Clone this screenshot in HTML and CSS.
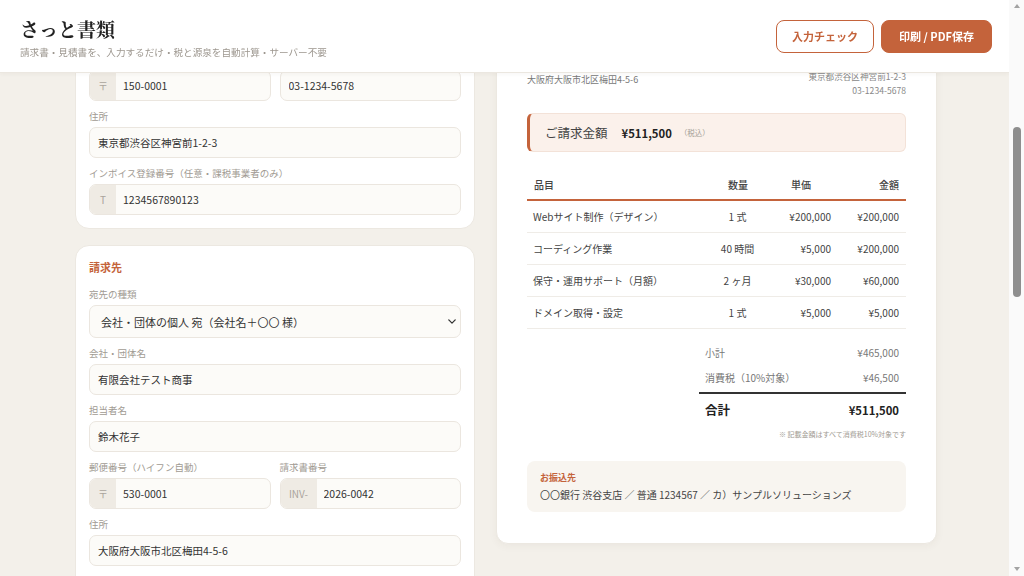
FILE: index.html
```html
<!DOCTYPE html>
<html lang="ja">
  <head>
    <meta charset="UTF-8" />
    <title>さっと書類</title>
    <link rel="stylesheet" href="styles.css">
  </head>
  <body>
    <div class="app">
      <header class="topbar">
        <div class="brand">
          <h1>さっと書類</h1>
          <p>請求書・見積書を、入力するだけ・税と源泉を自動計算・サーバー不要</p>
        </div>
        <div class="actions">
          <button class="btn btn-outline">入力チェック</button>
          <button class="btn btn-primary">印刷 / PDF保存</button>
        </div>
      </header>

      <main class="layout">
        <section class="editor">
          <div class="card">
            <div class="card-title">書類設定</div>
            <div class="field">
              <label>書類の種類</label>
              <div class="select">
                <select><option>請求書</option><option>見積書</option></select>
                <svg viewBox="0 0 10 6" width="8" height="5"><path d="M1 1l4 4 4-4" fill="none" stroke="#333" stroke-width="1.6" stroke-linecap="round" stroke-linejoin="round"/></svg>
              </div>
            </div>
            <div class="row field">
              <div>
                <label>発行日</label>
                <input class="text" value="2026-01-31">
              </div>
              <div>
                <label>お支払期限</label>
                <input class="text" value="2026-02-28">
              </div>
            </div>
          </div>

          <div class="card">
            <div class="card-title">発行元（あなた）</div>
            <div class="field">
              <label>屋号・会社名</label>
              <input class="text" value="サンプルソリューションズ">
            </div>
            <div class="field">
              <label>担当者名</label>
              <input class="text" value="山田太郎">
            </div>
            <div class="row field">
              <div>
                <label>郵便番号（ハイフン自動）</label>
                <div class="affix"><span>〒</span><input value="150-0001"></div>
              </div>
              <div>
                <label>電話番号</label>
                <input class="text" value="03-1234-5678">
              </div>
            </div>
            <div class="field">
              <label>住所</label>
              <input class="text" value="東京都渋谷区神宮前1-2-3">
            </div>
            <div class="field">
              <label>インボイス登録番号（任意・課税事業者のみ）</label>
              <div class="affix"><span>T</span><input value="1234567890123"></div>
            </div>
          </div>

          <div class="card client">
            <div class="card-title">請求先</div>
            <div class="field">
              <label>宛先の種類</label>
              <div class="select">
                <select>
                  <option>会社・団体の個人 宛（会社名＋〇〇 様）</option>
                  <option>会社・団体 宛（御中）</option>
                  <option>個人 宛（様）</option>
                </select>
                <svg viewBox="0 0 10 6" width="8" height="5"><path d="M1 1l4 4 4-4" fill="none" stroke="#333" stroke-width="1.6" stroke-linecap="round" stroke-linejoin="round"/></svg>
              </div>
            </div>
            <div class="field">
              <label>会社・団体名</label>
              <input class="text" value="有限会社テスト商事">
            </div>
            <div class="field">
              <label>担当者名</label>
              <input class="text" value="鈴木花子">
            </div>
            <div class="row field">
              <div>
                <label>郵便番号（ハイフン自動）</label>
                <div class="affix"><span>〒</span><input value="530-0001"></div>
              </div>
              <div>
                <label>請求書番号</label>
                <div class="affix affix-wide"><span>INV-</span><input value="2026-0042"></div>
              </div>
            </div>
            <div class="field">
              <label>住所</label>
              <input class="text" value="大阪府大阪市北区梅田4-5-6">
            </div>
            <div class="field">
              <label>件名</label>
              <input class="text" value="Webサイト制作一式">
            </div>
          </div>

          <div class="card">
            <div class="card-title">明細</div>
            <div class="item">
              <input class="text" value="Webサイト制作（デザイン）">
              <div class="item-nums">
                <input class="text" value="1"><input class="text" value="式"><input class="text" value="200000">
              </div>
            </div>
            <div class="item">
              <input class="text" value="コーディング作業">
              <div class="item-nums">
                <input class="text" value="40"><input class="text" value="時間"><input class="text" value="5000">
              </div>
            </div>
            <div class="item">
              <input class="text" value="保守・運用サポート（月額）">
              <div class="item-nums">
                <input class="text" value="2"><input class="text" value="ヶ月"><input class="text" value="30000">
              </div>
            </div>
            <div class="item">
              <input class="text" value="ドメイン取得・設定">
              <div class="item-nums">
                <input class="text" value="1"><input class="text" value="式"><input class="text" value="5000">
              </div>
            </div>
            <button class="btn-add">＋ 行を追加</button>
          </div>

          <div class="card">
            <div class="card-title">税・源泉徴収</div>
            <div class="row field">
              <div>
                <label>消費税率</label>
                <input class="text" value="10%">
              </div>
              <div>
                <label>端数処理</label>
                <input class="text" value="切り捨て">
              </div>
            </div>
            <div class="field">
              <label>源泉徴収</label>
              <input class="text" value="なし">
            </div>
          </div>

          <div class="card">
            <div class="card-title">お振込先・備考</div>
            <div class="field">
              <label>お振込先</label>
              <input class="text" value="〇〇銀行 渋谷支店 ／ 普通 1234567 ／ カ）サンプルソリューションズ">
            </div>
            <div class="field">
              <label>備考</label>
              <textarea class="text">お振込手数料はご負担ください。</textarea>
            </div>
          </div>
        </section>

        <section class="preview">
          <div class="paper">
            <div class="paper-head">
              <div class="doc-title">請求書</div>
              <div class="doc-no">No. INV-2026-0042</div>
            </div>
            <div class="doc-dates">
              <div>発行日 2026年1月31日</div>
              <div>お支払期限 2026年2月28日</div>
            </div>
            <div class="subject">件名：Webサイト制作一式</div>
            <div class="greeting">下記のとおりご請求申し上げます。</div>

            <div class="parties">
              <div class="to">
                <div class="to-name">有限会社テスト商事</div>
                <div class="to-person">鈴木花子 様</div>
                <div>〒530-0001</div>
                <div>大阪府大阪市北区梅田4-5-6</div>
              </div>
              <div class="from">
                <div class="stamp">山田</div>
                <div class="from-name">サンプルソリューションズ</div>
                <div>山田太郎</div>
                <div>登録番号 T1234567890123</div>
                <div>〒150-0001</div>
                <div>東京都渋谷区神宮前1-2-3</div>
                <div>03-1234-5678</div>
              </div>
            </div>

            <div class="amount">
              <span class="amount-label">ご請求金額</span>
              <span class="amount-value">¥511,500</span>
              <span class="amount-note">（税込）</span>
            </div>

            <table class="items">
              <thead>
                <tr>
                  <th>品目</th>
                  <th class="col-qty">数量</th>
                  <th class="col-price">単価</th>
                  <th class="col-amount">金額</th>
                </tr>
              </thead>
              <tbody>
                <tr><td>Webサイト制作（デザイン）</td><td class="qty">1 式</td><td class="num">¥200,000</td><td class="num">¥200,000</td></tr>
                <tr><td>コーディング作業</td><td class="qty">40 時間</td><td class="num">¥5,000</td><td class="num">¥200,000</td></tr>
                <tr><td>保守・運用サポート（月額）</td><td class="qty">2 ヶ月</td><td class="num">¥30,000</td><td class="num">¥60,000</td></tr>
                <tr><td>ドメイン取得・設定</td><td class="qty">1 式</td><td class="num">¥5,000</td><td class="num">¥5,000</td></tr>
              </tbody>
            </table>

            <div class="totals">
              <div class="totals-row"><span>小計</span><span>¥465,000</span></div>
              <div class="totals-row"><span>消費税（10%対象）</span><span>¥46,500</span></div>
              <div class="totals-row totals-grand"><span>合計</span><span class="grand-value">¥511,500</span></div>
            </div>
            <div class="tax-note">※ 記載金額はすべて消費税10%対象です</div>

            <div class="bank">
              <div class="bank-title">お振込先</div>
              <div class="bank-text">〇〇銀行 渋谷支店 ／ 普通 1234567 ／ カ）サンプルソリューションズ</div>
            </div>
          </div>
        </section>
      </main>
    </div>

    <div class="scrollbar">
      <span class="arrow arrow-up"></span>
      <div class="track"><div class="thumb"></div></div>
      <span class="arrow arrow-down"></span>
    </div>

    <script>
      // open at the 請求先 section
      var app = document.querySelector(".app");
      var client = document.querySelector(".client");
      app.scrollTop = client.getBoundingClientRect().top - 245;

      // scrollbar thumb follows the scroll position
      var track = document.querySelector(".track");
      var thumb = document.querySelector(".thumb");
      function drawThumb() {
        var h = track.clientHeight;
        thumb.style.height = (h * app.clientHeight / app.scrollHeight) + "px";
        thumb.style.top = (h * app.scrollTop / app.scrollHeight) + "px";
      }
      app.addEventListener("scroll", drawThumb);
      drawThumb();
    </script>
  </body>
</html>
```

FILE: styles.css
```css
* {
  box-sizing: border-box;
}
html, body {
  height: 100%;
}
html {
  background-color: #f3f0ea;
}
body {
  margin: 0;
  display: flex;
  overflow: hidden;
  font-family: "Noto Sans CJK JP", "Noto Sans", sans-serif;
  color: #333333;
}
input, select, textarea, button {
  font-family: inherit;
}
.app {
  flex: 1;
  height: 100vh;
  overflow-y: auto;
  scrollbar-width: none;
}

/* scrollbar */
.scrollbar {
  flex: none;
  width: 15px;
  height: 100vh;
  display: flex;
  flex-direction: column;
  background: #fafafa;
}
.arrow {
  flex: none;
  height: 15px;
  display: flex;
  justify-content: center;
  align-items: flex-start;
  padding-top: 4px;
}
.arrow::before {
  content: "";
  border-left: 3.5px solid transparent;
  border-right: 3.5px solid transparent;
}
.arrow-up::before {
  border-bottom: 4px solid #a3a3a3;
}
.arrow-down {
  padding-top: 6px;
}
.arrow-down::before {
  border-top: 4px solid #a3a3a3;
}
.track {
  flex: 1;
  position: relative;
}
.thumb {
  position: absolute;
  left: 4px;
  width: 8px;
  border-radius: 4px;
  background: #8e8e8e;
}

/* header */
.topbar {
  position: sticky;
  top: 0;
  z-index: 10;
  height: 73px;
  display: flex;
  align-items: center;
  justify-content: space-between;
  padding: 0 17px 0 20px;
  background: #ffffff;
  border-bottom: 1px solid #ebe7e0;
  box-shadow: 0 1px 4px rgba(80, 60, 30, 0.05);
}
.brand {
  margin-top: 3px;
}
.brand h1 {
  margin: 0;
  font-family: "Noto Serif CJK JP", "Noto Sans CJK JP", serif;
  font-size: 19px;
  line-height: 26px;
  font-weight: 700;
  color: #222222;
}
.brand p {
  margin: 3px 0 0;
  font-size: 9.6px;
  line-height: 14px;
  color: #9d978f;
}
.actions {
  display: flex;
  gap: 7px;
}
.btn {
  height: 33px;
  padding: 0 15px;
  border: 1.5px solid #c4633b;
  border-radius: 8px;
  font-size: 11px;
  font-weight: 700;
  cursor: pointer;
}
.btn-outline {
  background: #ffffff;
  color: #c4633b;
}
.btn-primary {
  background: #c4633b;
  color: #ffffff;
  padding: 0 17px;
}

/* layout */
.layout {
  display: grid;
  grid-template-columns: 400px 441px;
  gap: 21px;
  justify-content: center;
  align-items: start;
  padding: 24px 0 24px 3px;
}

/* editor cards */
.card {
  background: #ffffff;
  border: 1px solid #ece8e1;
  border-radius: 14px;
  padding: 13px;
}
.card + .card {
  margin-top: 16px;
}
.card-title {
  font-size: 11px;
  line-height: 16px;
  font-weight: 700;
  color: #c4633b;
  margin-bottom: 12px;
}
.field + .field {
  margin-top: 8px;
}
.field label {
  display: block;
  font-size: 9.5px;
  line-height: 14px;
  color: #a19b93;
  margin-bottom: 4px;
}
.row {
  display: grid;
  grid-template-columns: 1fr 1fr;
  gap: 9px;
}
.text {
  display: block;
  width: 100%;
  height: 31px;
  padding: 0 8px;
  border: 1px solid #ebe6df;
  border-radius: 7px;
  background: #fcfbf8;
  font-size: 10.5px;
  color: #333333;
  outline: none;
}
textarea.text {
  height: 64px;
  padding: 8px;
  resize: none;
}
.affix {
  display: flex;
  height: 31px;
  border: 1px solid #ebe6df;
  border-radius: 7px;
  background: #fcfbf8;
  overflow: hidden;
}
.affix span {
  width: 26px;
  flex: none;
  display: flex;
  align-items: center;
  justify-content: center;
  background: #efebe4;
  font-size: 10px;
  color: #aaa49c;
}
.affix-wide span {
  width: 36px;
}
.affix input {
  flex: 1;
  min-width: 0;
  border: 0;
  background: transparent;
  padding: 0 7px;
  font-size: 10.5px;
  color: #333333;
  outline: none;
}
.select {
  position: relative;
}
.select select {
  display: block;
  width: 100%;
  height: 33px;
  padding: 0 24px 0 11px;
  border: 1px solid #ebe6df;
  border-radius: 7px;
  background: #fcfbf8;
  font-size: 11px;
  color: #333333;
  appearance: none;
  -webkit-appearance: none;
}
.select svg {
  position: absolute;
  right: 5px;
  top: 14px;
  pointer-events: none;
}
.item + .item {
  margin-top: 12px;
}
.item-nums {
  display: grid;
  grid-template-columns: 1fr 1fr 2fr;
  gap: 6px;
  margin-top: 6px;
}
.btn-add {
  margin-top: 12px;
  width: 100%;
  height: 32px;
  border: 1px dashed #d9b9a8;
  border-radius: 7px;
  background: #ffffff;
  color: #c4633b;
  font-size: 10.5px;
}

/* preview */
.paper {
  background: #ffffff;
  border: 1px solid #ece8e1;
  border-radius: 12px;
  padding: 30px 30px 31px;
  box-shadow: 0 2px 8px rgba(80, 60, 30, 0.05);
}
.paper-head {
  display: flex;
  justify-content: space-between;
  align-items: flex-end;
  padding-bottom: 10px;
  border-bottom: 2px solid #c4633b;
  margin-bottom: 14px;
}
.doc-title {
  font-size: 22px;
  line-height: 30px;
  font-weight: 700;
  letter-spacing: 6px;
  color: #222222;
}
.doc-no {
  font-size: 9px;
  line-height: 14px;
  color: #777777;
}
.doc-dates {
  font-size: 9px;
  line-height: 14px;
  color: #777777;
  text-align: right;
  margin-bottom: 16px;
}
.subject {
  width: 60%;
  font-size: 11px;
  line-height: 18px;
  padding-bottom: 4px;
  border-bottom: 1px solid #dddddd;
  margin-bottom: 6px;
}
.greeting {
  font-size: 9px;
  line-height: 14px;
  color: #777777;
  margin-bottom: 69px;
}
.parties {
  display: flex;
  justify-content: space-between;
  align-items: flex-end;
}
.to {
  font-size: 9px;
  line-height: 14px;
  color: #777777;
  margin-bottom: 10px;
}
.to-name {
  font-size: 14px;
  line-height: 22px;
  font-weight: 700;
  color: #222222;
  padding-bottom: 3px;
  border-bottom: 1px solid #333333;
  margin-bottom: 4px;
}
.to-person {
  font-size: 11px;
  line-height: 18px;
  color: #333333;
  margin-bottom: 4px;
}
.from {
  font-size: 8.6px;
  line-height: 14px;
  color: #888888;
  text-align: right;
}
.stamp {
  display: inline-flex;
  align-items: center;
  justify-content: center;
  width: 44px;
  height: 44px;
  margin-bottom: 6px;
  border: 2px solid #d0644a;
  border-radius: 4px;
  font-size: 13px;
  font-weight: 700;
  color: #d0644a;
}
.from-name {
  font-size: 11px;
  line-height: 18px;
  font-weight: 700;
  color: #333333;
}
.amount {
  display: flex;
  align-items: center;
  height: 39px;
  margin-top: 16px;
  padding: 0 15px;
  background: #fbf1eb;
  border: 1px solid #f3e2d8;
  border-left: 3px solid #c4633b;
  border-radius: 6px;
}
.amount-label {
  font-size: 12.5px;
  color: #444444;
}
.amount-value {
  margin-left: 14px;
  font-size: 11.3px;
  font-weight: 700;
  color: #222222;
}
.amount-note {
  margin-left: 8px;
  font-size: 7.5px;
  color: #a39d95;
}
.items {
  width: 100%;
  margin-top: 19px;
  border-collapse: collapse;
  table-layout: fixed;
  font-size: 10px;
}
.items th {
  padding: 8px 7px;
  line-height: 12px;
  font-weight: 500;
  text-align: left;
  color: #444444;
  border-bottom: 2px solid #c4633b;
}
.items th.col-qty {
  width: 52px;
  text-align: center;
}
.items th.col-price {
  width: 74px;
  text-align: center;
}
.items th.col-amount {
  width: 68px;
  text-align: right;
}
.items td {
  padding: 10px 7px 10px 6px;
  line-height: 11px;
  color: #444444;
  border-bottom: 1px solid #efece7;
  white-space: nowrap;
}
.items td.qty {
  text-align: center;
}
.items td.num {
  text-align: right;
  padding-right: 7px;
}
.totals {
  width: 207px;
  margin: 11px 0 0 auto;
}
.totals-row {
  display: flex;
  justify-content: space-between;
  padding: 5px 7px 5px 6px;
  font-size: 10px;
  line-height: 15px;
  color: #777777;
}
.totals-grand {
  margin-top: 2px;
  padding: 9px 7px 7px 6px;
  border-top: 2px solid #333333;
  font-size: 12.5px;
  line-height: 14px;
  font-weight: 700;
  color: #222222;
}
.grand-value {
  font-size: 11.3px;
}
.tax-note {
  margin-top: 5px;
  font-size: 7px;
  line-height: 10px;
  color: #a19b93;
  text-align: right;
}
.bank {
  margin-top: 22px;
  padding: 11px 13px 10px;
  background: #f8f5f0;
  border-radius: 8px;
}
.bank-title {
  font-size: 9px;
  line-height: 12px;
  font-weight: 700;
  color: #c4633b;
}
.bank-text {
  margin-top: 4px;
  font-size: 10px;
  line-height: 14px;
  color: #444444;
}
```
